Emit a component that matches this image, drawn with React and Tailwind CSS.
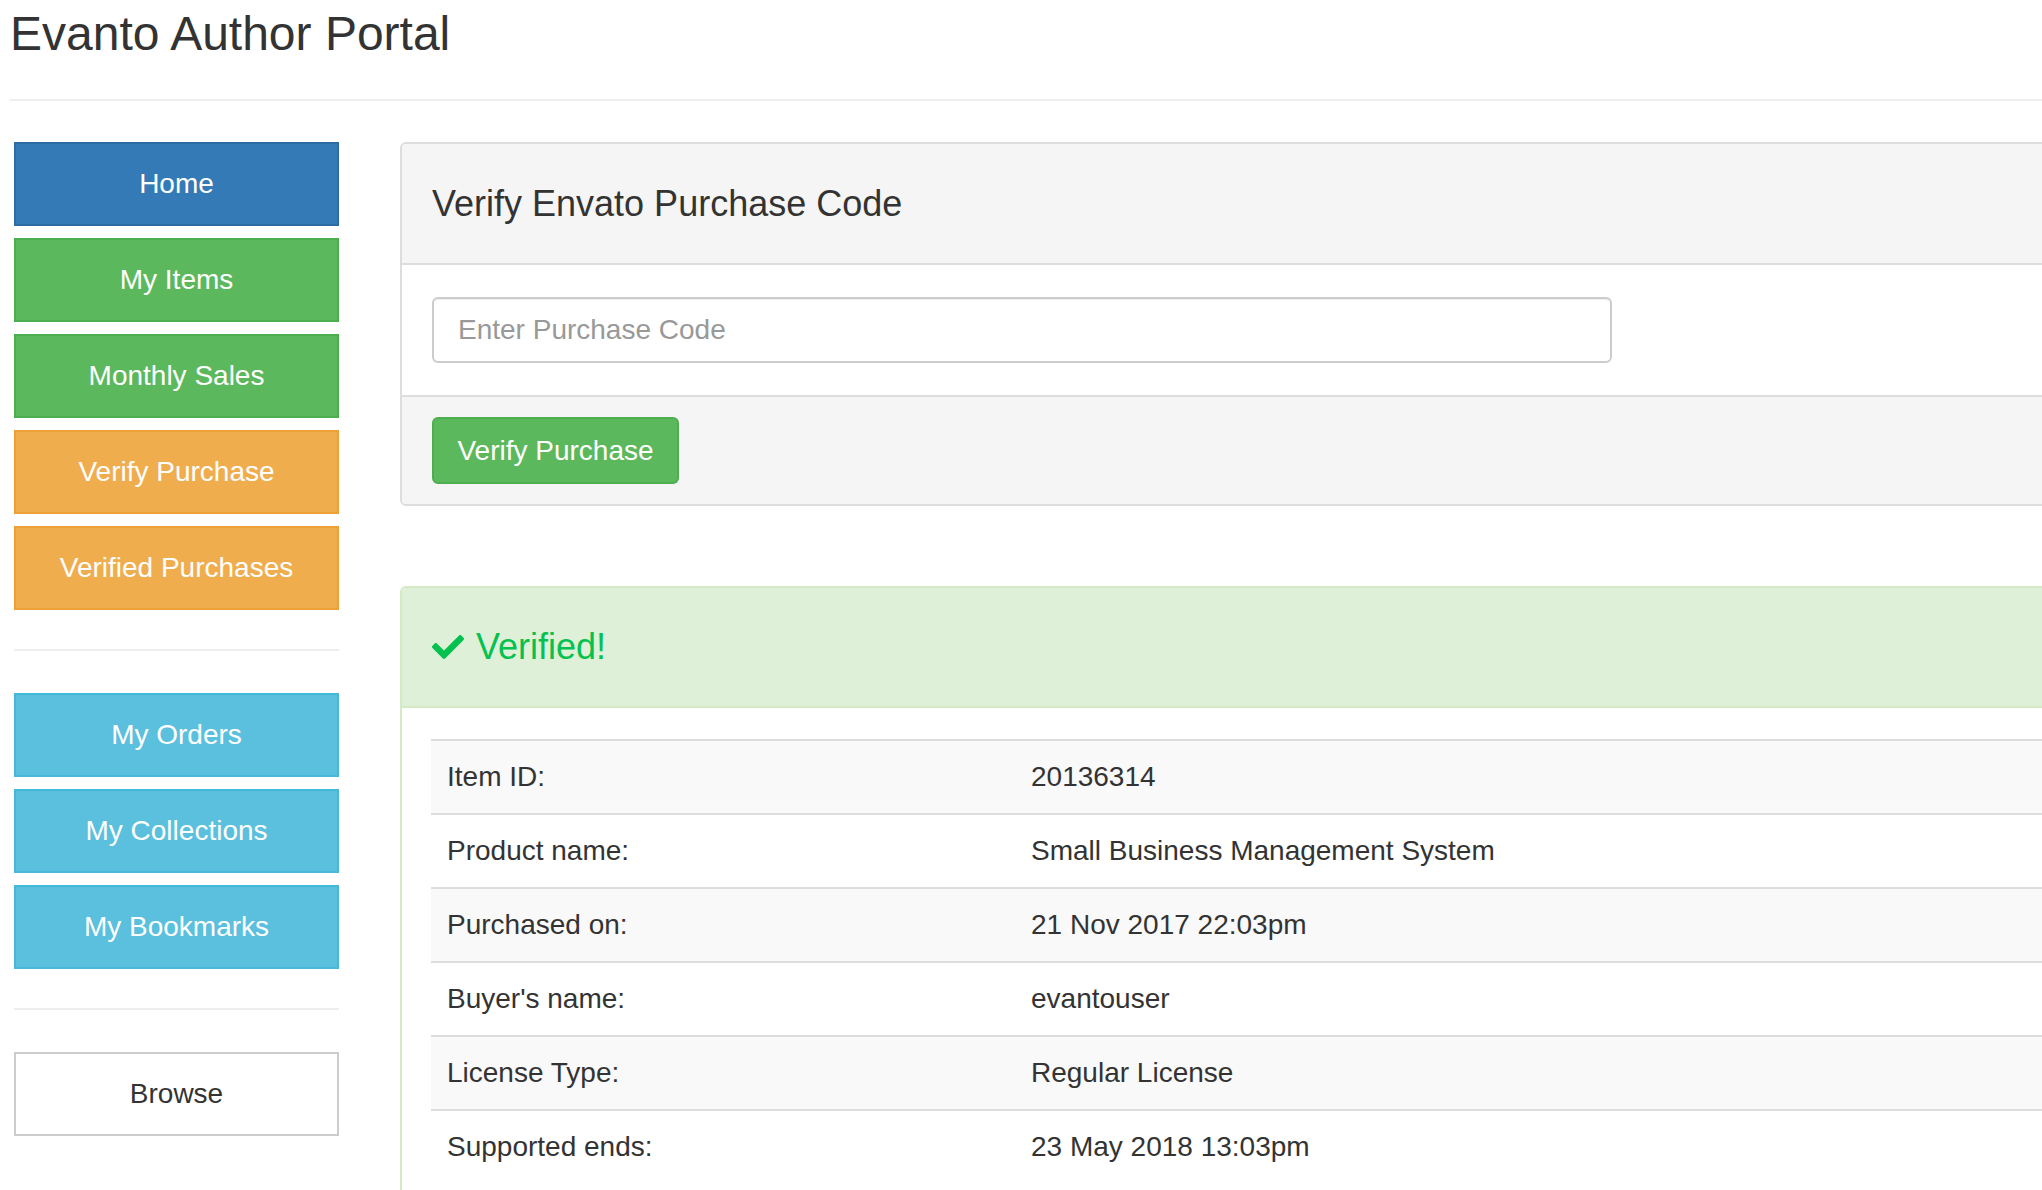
import React from "react";
import { FaCheck } from "react-icons/fa";

const navTop = [
  { label: "Home", cls: "bg-[#337ab7] border-[#2e6da4] text-white" },
  { label: "My Items", cls: "bg-[#5cb85c] border-[#4cae4c] text-white" },
  { label: "Monthly Sales", cls: "bg-[#5cb85c] border-[#4cae4c] text-white" },
  { label: "Verify Purchase", cls: "bg-[#f0ad4e] border-[#eea236] text-white" },
  { label: "Verified Purchases", cls: "bg-[#f0ad4e] border-[#eea236] text-white" },
];

const navMid = [
  { label: "My Orders", cls: "bg-[#5bc0de] border-[#46b8da] text-white" },
  { label: "My Collections", cls: "bg-[#5bc0de] border-[#46b8da] text-white" },
  { label: "My Bookmarks", cls: "bg-[#5bc0de] border-[#46b8da] text-white" },
];

const rows = [
  ["Item ID:", "20136314"],
  ["Product name:", "Small Business Management System"],
  ["Purchased on:", "21 Nov 2017 22:03pm"],
  ["Buyer's name:", "evantouser"],
  ["License Type:", "Regular License"],
  ["Supported ends:", "23 May 2018 13:03pm"],
];

function NavButton({ label, cls }) {
  return (
    <a
      href="#"
      className={`flex h-[84px] w-full items-center justify-center border-2 text-[28px] leading-none ${cls}`}
    >
      {label}
    </a>
  );
}

export default function App() {
  return (
    <div className="h-[1190px] w-[2042px] overflow-hidden bg-white font-['Liberation_Sans',Arial,sans-serif] text-[#333]">
      <div className="pl-[10px]">
        <h1 className="pt-[10px] text-[48px] font-normal leading-none">Evanto Author Portal</h1>
        <div className="mt-[41px] h-[2px] w-[2100px] bg-[#eee]" />
      </div>

      <div className="mt-[41px] flex">
        {/* Sidebar */}
        <div className="ml-[14px] flex w-[325px] shrink-0 flex-col">
          <div className="flex flex-col gap-[12px]">
            {navTop.map((n) => (
              <NavButton key={n.label} {...n} />
            ))}
          </div>
          <div className="mt-[39px] mb-[42px] h-[2px] bg-[#eee]" />
          <div className="flex flex-col gap-[12px]">
            {navMid.map((n) => (
              <NavButton key={n.label} {...n} />
            ))}
          </div>
          <div className="mt-[39px] mb-[42px] h-[2px] bg-[#eee]" />
          <NavButton label="Browse" cls="bg-white border-[#ccc] text-[#333]" />
        </div>

        {/* Main */}
        <div className="ml-[61px] w-[1800px] shrink-0">
          {/* Verify panel */}
          <div className="overflow-hidden rounded-[6px] border-2 border-[#ddd] bg-white">
            <div className="flex h-[121px] items-center border-b-2 border-[#ddd] bg-[#f5f5f5] px-[30px] pt-[1px]">
              <h3 className="text-[36px] font-normal leading-none text-[#333]">Verify Envato Purchase Code</h3>
            </div>
            <div className="px-[30px] py-[32px]">
              <div className="flex h-[66px] w-[1180px] items-center rounded-[6px] border-2 border-[#ccc] bg-white px-[24px] shadow-[inset_0_1px_1px_rgba(0,0,0,0.075)]">
                <span className="text-[28px] leading-none text-[#999]">Enter Purchase Code</span>
              </div>
            </div>
            <div className="border-t-2 border-[#ddd] bg-[#f5f5f5] px-[30px] pt-[20px] pb-[20px]">
              <button className="flex h-[67px] w-[247px] items-center justify-center rounded-[6px] border-2 border-[#4cae4c] bg-[#5cb85c] text-[28px] leading-none text-white">
                Verify Purchase
              </button>
            </div>
          </div>

          {/* Result panel */}
          <div className="mt-[80px] overflow-hidden rounded-[6px] border-2 border-[#d6e9c6] bg-white">
            <div className="flex h-[120px] items-center gap-[12px] border-b-2 border-[#d6e9c6] bg-[#dff0d8] px-[30px] text-[#05c150]">
              <FaCheck className="h-[32px] w-[32px]" />
              <span className="text-[36px] leading-none">Verified!</span>
            </div>
            <div className="px-[29px] pt-[31px] pb-[20px]">
              {rows.map(([k, v], i) => (
                <div
                  key={k}
                  className={`grid h-[74px] grid-cols-[584px_1fr] items-center border-t-2 border-[#ddd] text-[28px] leading-none ${
                    i % 2 === 0 ? "bg-[#f9f9f9]" : "bg-white"
                  }`}
                >
                  <div className="px-[16px]">{k}</div>
                  <div className="px-[16px]">{v}</div>
                </div>
              ))}
            </div>
          </div>
        </div>
      </div>
    </div>
  );
}
